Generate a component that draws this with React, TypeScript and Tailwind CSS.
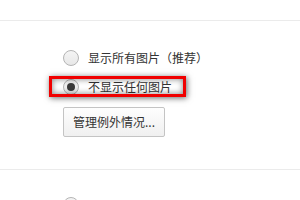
import React from "react";

const font = { fontFamily: '"Noto Sans CJK SC", "Noto Sans", sans-serif' };

function Radio({ checked }: { checked?: boolean }) {
  return (
    <div className="w-[16px] h-[16px] shrink-0 rounded-full border border-[#b4b4b4] bg-gradient-to-b from-[#f4f4f4] to-[#e8e8e8] flex items-center justify-center">
      {checked && <div className="w-[8px] h-[8px] rounded-full bg-[#3a3a3a]" />}
    </div>
  );
}

export default function App() {
  return (
    <div className="w-[300px] h-[200px] bg-white overflow-hidden text-[#333] text-[12px]" style={font}>
      <div className="h-[20px]" />
      <div className="border-t border-[#ebebeb] pt-[29px] pb-[32px] pl-[63px] flex flex-col">
        <div className="flex items-center gap-[9px] h-[16px]">
          <Radio />
          <span className="leading-none">显示所有图片（推荐）</span>
        </div>
        <div className="relative flex items-center gap-[9px] h-[16px] mt-[13px]">
          <Radio checked />
          <span className="leading-none">不显示任何图片</span>
          <div className="absolute left-[-14px] top-[-3px] w-[137px] h-[21px] border-[3px] border-[#f00000] shadow-[1px_1px_6px_rgba(0,0,0,0.6),inset_0_0_6px_rgba(0,0,0,0.5)]" />
        </div>
        <button className="mt-[12px] w-[102px] h-[30px] rounded-[2px] border border-[#c4c4c4] bg-gradient-to-b from-[#fefefe] to-[#f0f0f0] text-[12px] text-[#333] flex items-center justify-center">
          管理例外情况...
        </button>
      </div>
      <div className="border-t border-[#ebebeb] pt-[27px] pl-[63px]">
        <Radio />
      </div>
    </div>
  );
}
